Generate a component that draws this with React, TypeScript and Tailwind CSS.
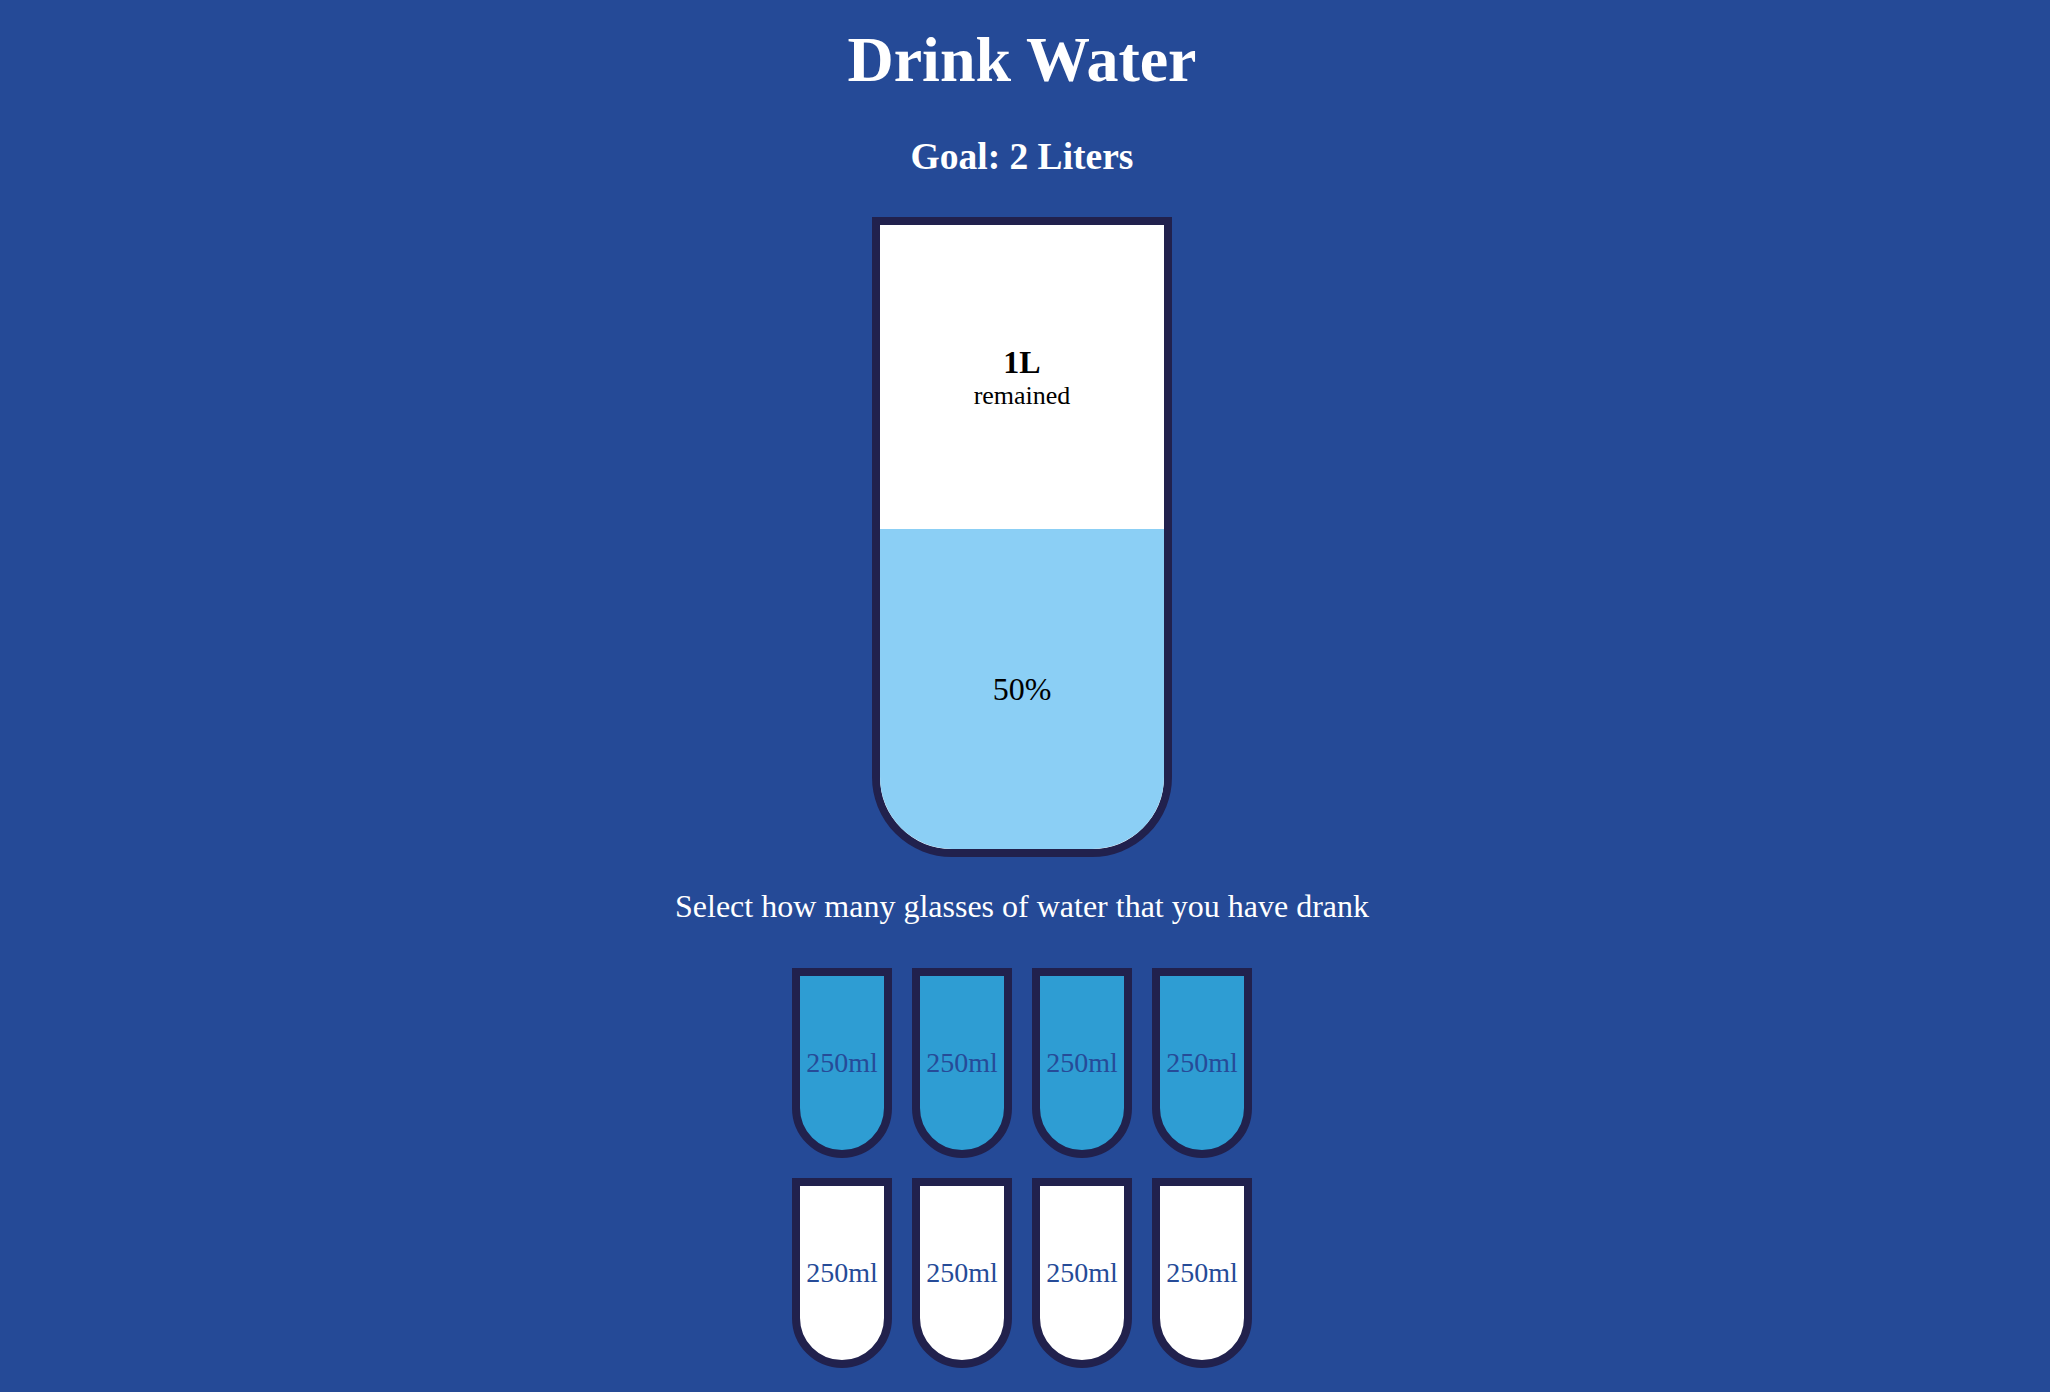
import React from "react";

const serif = { fontFamily: '"Liberation Serif", "Times New Roman", serif' };

function SmallGlass({ full }: { full: boolean }) {
  return (
    <div
      className={`w-[100px] h-[190px] border-[8px] border-[#21214d] rounded-b-[50px] flex items-center justify-center ${
        full ? "bg-[#2e9dd3]" : "bg-white"
      }`}
    >
      <span className="text-[28px] leading-[32px] text-[#264b98]">250ml</span>
    </div>
  );
}

export default function App() {
  const glasses = [true, true, true, true, false, false, false, false];
  return (
    <div className="min-h-screen w-full bg-[#254a97] text-white" style={serif}>
      <div className="w-[2044px] flex flex-col items-center">
        <h1 className="mt-[23px] text-[64px] leading-[74px] font-bold">Drink Water</h1>
        <h3 className="mt-[38px] text-[37.5px] leading-[43px] font-bold">Goal: 2 Liters</h3>
        <div className="mt-[39px] w-[300px] h-[640px] border-[8px] border-[#21214d] rounded-b-[80px] overflow-hidden flex flex-col bg-white">
          <div className="h-[304px] flex flex-col items-center justify-center text-black">
            <span className="text-[32px] leading-[37px] font-bold">1L</span>
            <small className="text-[26px] leading-[30px]">remained</small>
          </div>
          <div className="flex-1 bg-[#8bcff5] flex items-center justify-center text-black">
            <span className="text-[32px] leading-[37px]">50%</span>
          </div>
        </div>
        <p className="mt-[31px] text-[32px] leading-[37px]">
          Select how many glasses of water that you have drank
        </p>
        <div className="mt-[43px] grid grid-cols-4 gap-[20px]">
          {glasses.map((f, i) => (
            <SmallGlass key={i} full={f} />
          ))}
        </div>
      </div>
    </div>
  );
}
